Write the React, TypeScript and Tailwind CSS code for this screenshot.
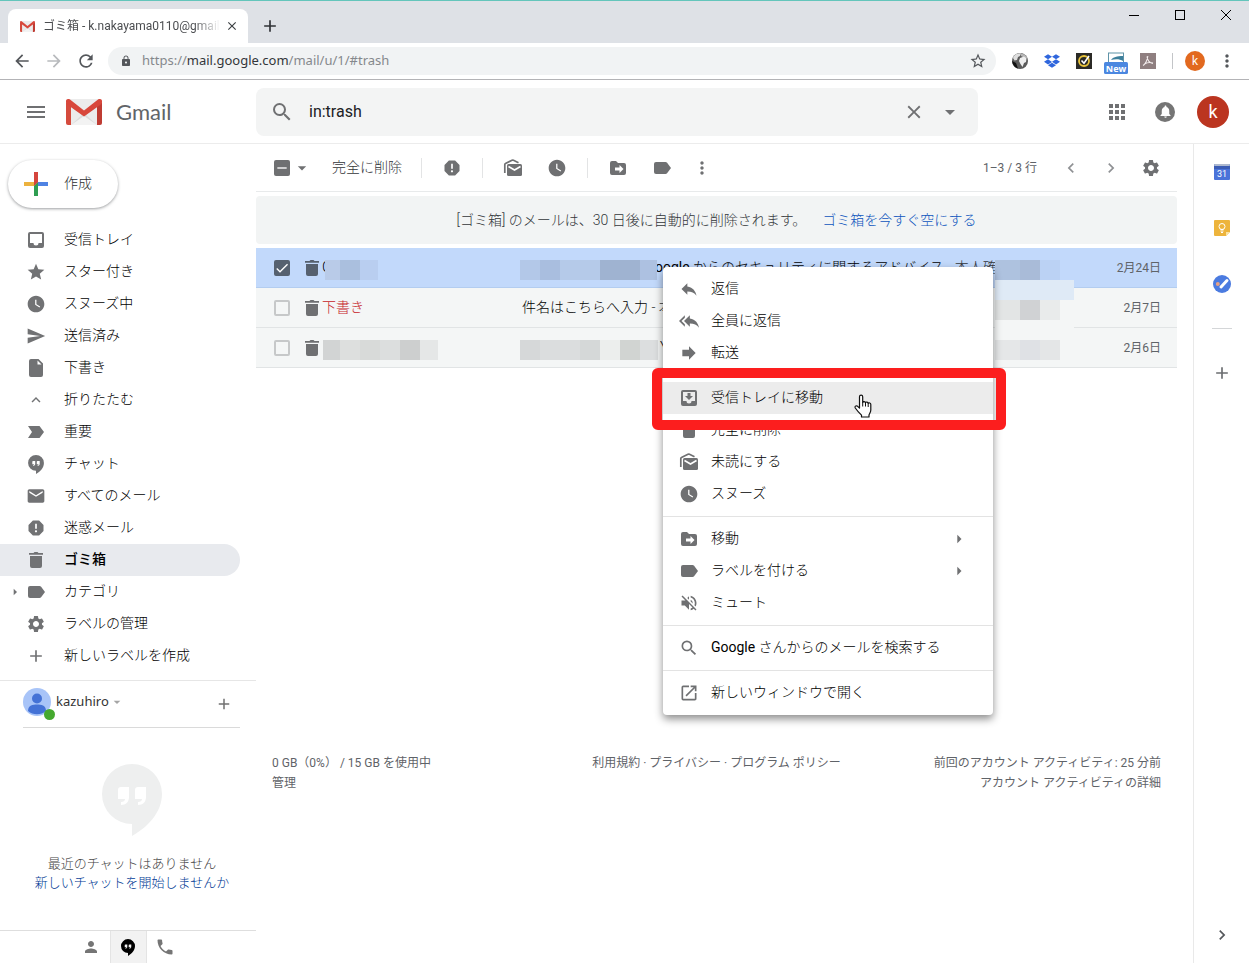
import type { ReactNode } from 'react'
import { FaDropbox } from 'react-icons/fa'
import {
  MdAdd,
  MdApps,
  MdArrowBack,
  MdArrowDropDown,
  MdArrowForward,
  MdArrowRight,
  MdCheck,
  MdChevronLeft,
  MdChevronRight,
  MdClose,
  MdEmail,
  MdExpandLess,
  MdForward,
  MdLock,
  MdMenu,
  MdMoreVert,
  MdNotifications,
  MdOpenInNew,
  MdPerson,
  MdPhone,
  MdRefresh,
  MdRemove,
  MdReply,
  MdReplyAll,
  MdReport,
  MdSearch,
  MdSend,
  MdSettings,
  MdStar,
  MdStarBorder,
  MdVolumeOff,
  MdWatchLater,
} from 'react-icons/md'

const GmailLogo = ({ className }: { className: string }) => (
  <svg viewBox="0 0 36 26" className={className} aria-hidden="true">
    <rect x="1" y="0" width="34" height="26" rx="2" fill="#ececec" />
    <path d="M5 26 18 14l13 12z" fill="#dcdcdc" />
    <path d="M5 26 18 17l13 9z" fill="#f3f3f3" />
    <path d="M5 6v20H2a2 2 0 0 1-2-2V3z" fill="#d54b3d" />
    <path d="M31 6v20h3a2 2 0 0 0 2-2V3z" fill="#bf3c33" />
    <path
      d="M0 3A2.500 2.500 0 0 1 4 .500L18 11.500 32 .500a2.500 2.500 0 0 1 4 2.500c0 1-.4 1.800-1.200 2.400L18 17.500 1.200 5.400A3 3 0 0 1 0 3z"
      fill="#d8473b"
    />
  </svg>
)

const HangoutsIcon = ({ className }: { className: string }) => (
  <svg viewBox="0 0 60 72" className={className} aria-hidden="true">
    <path
      fillRule="evenodd"
      fill="currentColor"
      d="M30 0a30 30 0 0 1 30 30c0 18-14 33-30 42V60a30 30 0 0 1 0-60zM19 23a3 3 0 0 0-3 3v9h7c0 2-1.500 3-4 3v3c5 0 8-3 8-8V23zM36 23a3 3 0 0 0-3 3v9h7c0 2-1.500 3-4 3v3c5 0 8-3 8-8V23z"
    />
  </svg>
)

// Solid 20px glyphs of the mail list
const Glyph = ({ d, className = '' }: { d: string; className?: string }) => (
  <svg
    viewBox="0 0 20 20"
    className={`size-5 ${className}`}
    fill="currentColor"
    fillRule="evenodd"
    aria-hidden="true"
  >
    <path d={d} />
  </svg>
)

const InboxIcon = () => (
  <Glyph d="M4 2h12a2 2 0 0 1 2 2v12a2 2 0 0 1-2 2H4a2 2 0 0 1-2-2V4a2 2 0 0 1 2-2zM4 4v9h3.500a2.500 2.500 0 0 0 5 0H16V4z" />
)

const MoveToInboxIcon = () => (
  <Glyph d="M4 2h12a2 2 0 0 1 2 2v12a2 2 0 0 1-2 2H4a2 2 0 0 1-2-2V4a2 2 0 0 1 2-2zM4 4v9h3.500a2.500 2.500 0 0 0 5 0H16V4zM8.500 5h3v3H14l-4 4-4-4h2.500z" />
)

const TrashIcon = ({ className }: { className?: string }) => (
  <Glyph
    className={className}
    d="M3 3h4.500l1-1h3l1 1H17v1.700H3zM4 6h12v10a2 2 0 0 1-2 2H6a2 2 0 0 1-2-2z"
  />
)

const LabelIcon = () => (
  <Glyph d="M4 4h9.500a2 2 0 0 1 1.600.8L19 10l-3.900 5.200a2 2 0 0 1-1.600.8H4a2 2 0 0 1-2-2V6a2 2 0 0 1 2-2z" />
)

const ImportantIcon = () => <Glyph d="M2 4h11.500L18 10l-4.500 6H2l4-6z" />

const FileIcon = () => (
  <Glyph d="M5 1h7.500L17 5.500V17a2 2 0 0 1-2 2H5a2 2 0 0 1-2-2V3a2 2 0 0 1 2-2zM11.500 2.500v4h4z" />
)

const FolderMoveIcon = () => (
  <Glyph d="M4 3h4l2 2h6a2 2 0 0 1 2 2v8a2 2 0 0 1-2 2H4a2 2 0 0 1-2-2V5a2 2 0 0 1 2-2zM11.500 7v2.500H7v3h4.500V15l4-4z" />
)

const UnreadIcon = ({ className }: { className?: string }) => (
  <svg viewBox="0 0 20 20" className={className} aria-hidden="true">
    <path
      d="M1.800 15V6.500a1 1 0 0 1 .6-.9L9 2.300a2 2 0 0 1 1.500 0L15.500 4.800"
      fill="none"
      stroke="currentColor"
      strokeWidth="1.700"
    />
    <rect x="4" y="6" width="15" height="12" rx="1.500" fill="currentColor" />
    <path
      d="M5.500 8.500l6 3.500 6-3.500"
      fill="none"
      stroke="#fff"
      strokeWidth="1.600"
    />
  </svg>
)

const PlusLogo = () => (
  <svg viewBox="0 0 24 24" className="size-6" aria-hidden="true">
    <path d="M10 0h4v10l-4 4z" fill="#d5453d" />
    <path d="M0 10h10l4 0-4 4H0z" fill="#ecb23e" />
    <path d="M14 10h10v4H10z" fill="#4f83e3" />
    <path d="M10 14l4-4v14h-4z" fill="#2f9e52" />
    <path d="M10 10h4l-4 4z" fill="#d5453d" />
  </svg>
)

const GlobeIcon = () => (
  <svg viewBox="0 0 16 16" className="size-4" aria-hidden="true">
    <circle cx="8" cy="8" r="8" fill="#5b5b5b" />
    <path d="M1 5C2 1.500 6 0 9 .400L8 3 6 4 5 7 2.500 7.500z" fill="#dedede" />
    <path d="M9 .400c3 .2 5.500 2 6.500 5l-3-.4L9 3z" fill="#b5b5b5" />
    <path d="M8 5l4-1.500 2.500 2L14 9l-2 1-1.500 4L8.500 11 7 8z" fill="#efefef" />
    <path d="M0 8l4 2 2 5.500C3 14.500 .5 12 0 8z" fill="#111" />
  </svg>
)

const NortonIcon = () => (
  <svg viewBox="0 0 16 16" className="size-4" aria-hidden="true">
    <rect width="16" height="16" fill="#2b2a26" />
    <circle cx="8" cy="8" r="5" fill="none" stroke="#e8c33a" strokeWidth="1.800" />
    <path d="M5.500 7.500l2.500 2.800L13 3" fill="none" stroke="#fff" strokeWidth="1.600" />
  </svg>
)

const NewsIcon = () => (
  <svg viewBox="0 0 24 22" className="h-[22px] w-6" aria-hidden="true">
    <rect x="4.500" y="1" width="15" height="12" fill="#fff" stroke="#5f93a8" />
    <path d="M7 8c2-3 6-4 12-4v5c-3-2-8-2-12-1z" fill="#3c7f9b" />
    <rect x="0" y="10" width="24" height="12" rx="1.500" fill="#4b87e0" />
    <text
      x="12"
      y="19.500"
      textAnchor="middle"
      fill="#fff"
      fontSize="9"
      fontWeight="bold"
      fontFamily="Open Sans, sans-serif"
    >
      New
    </text>
  </svg>
)

const AcrobatIcon = () => (
  <svg viewBox="0 0 16 16" className="size-4" aria-hidden="true">
    <rect width="16" height="16" fill="#8f7f80" />
    <path
      d="M3 12.500c2-1 4.500-5 4.800-9.500M7 3.500c.5 4 2.500 6.500 6 7M4.500 11c2.500-1.500 5.500-2 8.500-1"
      fill="none"
      stroke="#f4eeee"
      strokeWidth="1.100"
    />
  </svg>
)

const CalendarIcon = () => (
  <svg viewBox="0 0 16 16" className="size-4" aria-hidden="true">
    <rect width="16" height="16" rx="1" fill="#4a73d9" />
    <rect width="16" height="2" rx="1" fill="#aeb9cf" />
    <path d="M0 2h16v3H0z" fill="#3b5cb4" />
    <text
      x="8"
      y="13"
      textAnchor="middle"
      fill="#fff"
      fontSize="9"
      fontFamily="Roboto, sans-serif"
    >
      31
    </text>
  </svg>
)

const KeepIcon = () => (
  <svg viewBox="0 0 16 16" className="size-4" aria-hidden="true">
    <path d="M1 0h14a1 1 0 0 1 1 1v11l-4 4H1a1 1 0 0 1-1-1V1a1 1 0 0 1 1-1z" fill="#edb43c" />
    <path d="M12 16v-4h4z" fill="#fbe3a2" />
    <circle cx="8" cy="6.500" r="3" fill="none" stroke="#fff" />
    <path d="M6.500 9.500h3M6.500 11h3M7 12.500h2" stroke="#fff" />
  </svg>
)

const TasksIcon = () => (
  <svg viewBox="0 0 18 18" className="size-[18px]" aria-hidden="true">
    <circle cx="9" cy="9" r="9" fill="#4b7be0" />
    <circle cx="4.800" cy="9" r="2" fill="#e6a184" />
    <path d="M8 12l6-6.500" stroke="#fff" strokeWidth="3" strokeLinecap="round" />
  </svg>
)

const HandCursor = () => (
  <svg viewBox="0 0 18 24" className="h-6 w-[18px]" aria-hidden="true">
    <path
      d="M5.500 14V2.800a1.600 1.600 0 0 1 3.200 0V8.500c.3-1.300 2.600-1.200 2.800.300.500-1.200 2.500-1 2.700.600.700-.9 2.600-.5 2.600 1.200V16c0 2-1.300 3.500-1.800 5v2H7.500v-1.800C5.800 19.500 3 16.500 1.300 14c-.9-1.500.7-2.800 2-1.900z"
      fill="#fff"
      stroke="#111"
      strokeWidth="1.200"
      strokeLinejoin="round"
    />
    <path d="M8.700 8.500v4M11.500 9v3.500M14.200 9.500V13" stroke="#111" />
  </svg>
)

const NAV = [
  { label: '受信トレイ', icon: <InboxIcon /> },
  { label: 'スター付き', icon: <MdStar /> },
  { label: 'スヌーズ中', icon: <MdWatchLater /> },
  { label: '送信済み', icon: <MdSend /> },
  { label: '下書き', icon: <FileIcon /> },
  { label: '折りたたむ', icon: <MdExpandLess className="p-px" /> },
  { label: '重要', icon: <ImportantIcon /> },
  { label: 'チャット', icon: <HangoutsIcon className="h-[19px] w-4" /> },
  { label: 'すべてのメール', icon: <MdEmail /> },
  { label: '迷惑メール', icon: <MdReport /> },
  { label: 'ゴミ箱', icon: <TrashIcon />, selected: true },
  { label: 'カテゴリ', icon: <LabelIcon />, expandable: true },
  { label: 'ラベルの管理', icon: <MdSettings /> },
  { label: '新しいラベルを作成', icon: <MdAdd /> },
]

const MENU = [
  [
    { label: '返信', icon: <MdReply /> },
    { label: '全員に返信', icon: <MdReplyAll /> },
    { label: '転送', icon: <MdForward /> },
  ],
  [
    { label: '受信トレイに移動', icon: <MoveToInboxIcon />, active: true },
    { label: '完全に削除', icon: <TrashIcon /> },
    { label: '未読にする', icon: <UnreadIcon className="size-5" /> },
    { label: 'スヌーズ', icon: <MdWatchLater /> },
  ],
  [
    { label: '移動', icon: <FolderMoveIcon />, submenu: true },
    { label: 'ラベルを付ける', icon: <LabelIcon />, submenu: true },
    { label: 'ミュート', icon: <MdVolumeOff /> },
  ],
  [{ sender: 'Google', label: ' さんからのメールを検索する', icon: <MdSearch /> }],
  [{ label: '新しいウィンドウで開く', icon: <MdOpenInNew /> }],
]

const IconButton = ({
  label,
  className = '',
  children,
}: {
  label: string
  className?: string
  children: ReactNode
}) => (
  <button
    type="button"
    aria-label={label}
    className={`flex shrink-0 items-center justify-center ${className}`}
  >
    {children}
  </button>
)

const BrowserChrome = () => (
  <header className="font-['Noto_Sans','Noto_Sans_CJK_JP',sans-serif]">
    <div className="flex h-[43px] border-t border-[#63c5bb] bg-[#dee1e6] pl-2">
      <div className="mt-2 flex w-60 items-center rounded-t-lg bg-white pr-2 pl-3">
        <GmailLogo className="h-[11px] w-[15px] shrink-0" />
        <span className="ml-2 min-w-0 flex-1 overflow-hidden mask-r-from-85% font-['Roboto','Noto_Sans_CJK_JP',sans-serif] text-[12px] whitespace-nowrap text-[#4b4d50]">
          ゴミ箱 - k.nakayama0110@gmail.c
        </span>
        <IconButton label="タブを閉じる" className="ml-1 size-4 text-[14px] text-[#3c4043]">
          <MdClose />
        </IconButton>
      </div>
      <IconButton label="新しいタブ" className="mt-2 ml-3 w-5 text-[20px] text-[#2f3236]">
        <MdAdd />
      </IconButton>
      <div className="ml-auto flex h-7 text-black">
        <IconButton label="最小化" className="w-[46px]">
          <svg viewBox="0 0 10 10" className="size-[10px]" stroke="currentColor">
            <path d="M0 5.500h10" />
          </svg>
        </IconButton>
        <IconButton label="最大化" className="w-[46px]">
          <svg viewBox="0 0 10 10" className="size-[10px]" fill="none" stroke="currentColor">
            <rect x=".5" y=".5" width="9" height="9" />
          </svg>
        </IconButton>
        <IconButton label="閉じる" className="w-[46px]">
          <svg viewBox="0 0 10 10" className="size-[10px]" stroke="currentColor">
            <path d="M0 0l10 10M10 0L0 10" />
          </svg>
        </IconButton>
      </div>
    </div>

    <div className="flex h-[37px] items-center border-b border-[#b3b3b6] bg-white pr-3 pl-3 text-[#54575b]">
      <IconButton label="戻る" className="size-5 text-[20px]">
        <MdArrowBack />
      </IconButton>
      <IconButton label="進む" className="ml-3 size-5 text-[20px] text-[#b8babd]">
        <MdArrowForward />
      </IconButton>
      <IconButton label="再読み込み" className="ml-3 size-5 text-[20px]">
        <MdRefresh />
      </IconButton>
      <div className="ml-3 flex h-7 flex-1 items-center rounded-full bg-[#f1f3f4] pr-2 pl-3">
        <MdLock className="size-3" />
        <div
          role="textbox"
          aria-label="アドレス"
          contentEditable
          suppressContentEditableWarning
          className="ml-[10px] flex-1 text-[13px] text-[#85888c]"
        >
          https://<span className="text-[#33363a]">mail.google.com</span>/mail/u/1/#trash
        </div>
        <IconButton label="ブックマーク" className="size-5 text-[18px]">
          <MdStarBorder />
        </IconButton>
      </div>
      <div className="ml-4 flex items-center gap-4">
        <GlobeIcon />
        <FaDropbox className="size-4 text-[#2f66dd]" />
        <NortonIcon />
        <div className="-mx-1 pt-1">
          <NewsIcon />
        </div>
        <AcrobatIcon />
      </div>
      <span className="ml-4 h-4 w-px bg-[#c3c5c8]" />
      <IconButton
        label="プロフィール"
        className="ml-3 size-5 rounded-full bg-[#e2691f] text-[12px] text-white"
      >
        k
      </IconButton>
      <IconButton label="メニュー" className="ml-3 size-5 text-[20px]">
        <MdMoreVert />
      </IconButton>
    </div>
  </header>
)

const AppHeader = () => (
  <div className="flex h-16 items-center border-b border-[#ececec] pr-5 pl-6 text-[#6f7072]">
    <div className="flex w-[232px] shrink-0 items-center">
      <IconButton label="メインメニュー" className="size-6 text-[24px]">
        <MdMenu />
      </IconButton>
      <a href="#inbox" className="ml-[18px] flex items-center gap-[14px]">
        <GmailLogo className="h-[26px] w-9" />
        <span className="font-['Lato',sans-serif] text-[22px] text-[#616468]">Gmail</span>
      </a>
    </div>
    <div className="flex h-12 max-w-[722px] flex-1 items-center rounded-lg bg-[#f3f4f4] pr-4 pl-[14px]">
      <MdSearch className="size-6" />
      <input
        type="text"
        aria-label="メールを検索"
        defaultValue="in:trash"
        className="ml-[15px] min-w-0 flex-1 bg-transparent text-[16px] text-[#202124] outline-none"
      />
      <IconButton label="検索をクリア" className="size-6 text-[22px]">
        <MdClose />
      </IconButton>
      <IconButton label="検索オプション" className="ml-3 size-6 text-[24px]">
        <MdArrowDropDown />
      </IconButton>
    </div>
    <div className="ml-auto flex items-center gap-[22px]">
      <IconButton label="Google アプリ" className="mr-1 size-6 text-[24px]">
        <MdApps />
      </IconButton>
      <IconButton
        label="通知"
        className="size-5 rounded-full bg-[#757575] text-[15px] text-white"
      >
        <MdNotifications />
      </IconButton>
      <IconButton
        label="アカウント"
        className="size-8 rounded-full bg-[#bb3520] text-[18px] text-white"
      >
        k
      </IconButton>
    </div>
  </div>
)

const Sidebar = () => (
  <aside className="flex w-64 shrink-0 flex-col pt-4">
    <button
      type="button"
      className="ml-2 flex h-12 w-[110px] items-center gap-4 rounded-full bg-white pl-4 text-[14px] font-light text-[#2c2e31] shadow-[0_1px_3px_rgba(60,64,67,0.5)]"
    >
      <PlusLogo />
      <span className="pb-0.5">作成</span>
    </button>

    <nav className="mt-4">
      {NAV.map((item) => (
        <a
          key={item.label}
          href="#label"
          className={`mr-4 flex h-8 items-center rounded-r-full text-[14px] text-black ${
            item.selected ? 'bg-[#e8eaee] font-medium' : 'font-light'
          }`}
        >
          <span className="flex w-[26px] justify-center pl-1 text-[16px] text-[#717274]">
            {item.expandable && <MdArrowRight />}
          </span>
          <span className="flex size-5 items-center justify-center text-[20px] text-[#717274]">
            {item.icon}
          </span>
          <span className="ml-[18px] pb-0.5">{item.label}</span>
        </a>
      ))}
    </nav>

    <section className="mt-2 border-t border-[#e6e6e6]">
      <div className="mr-4 ml-[23px] flex h-[47px] items-center border-b border-[#dadada]">
        <div className="flex items-center pb-1">
          <span className="relative size-7">
            <svg viewBox="0 0 28 28" className="size-7" aria-hidden="true">
              <circle cx="14" cy="14" r="14" fill="#a8c4f8" />
              <circle cx="14" cy="10.500" r="5" fill="#4472d6" />
              <path d="M5 23c0-6 5-6.500 9-6.500s9 .5 9 6.500a14 14 0 0 1-18 0z" fill="#4472d6" />
            </svg>
            <span className="absolute -right-1 -bottom-1 size-[11px] rounded-full bg-[#45a92f]" />
          </span>
          <button
            type="button"
            className="ml-[5px] flex items-center font-['Noto_Sans',sans-serif] text-[13px] text-[#333]"
          >
            kazuhiro
            <MdArrowDropDown className="size-4 text-[#a5a5a5]" />
          </button>
        </div>
        <IconButton label="新しい会話" className="ml-auto size-8 text-[18px] text-[#717171]">
          <MdAdd />
        </IconButton>
      </div>
      <div className="flex flex-col items-center pt-9 pl-2 text-[13px] leading-[19px] font-light text-[#444]">
        <HangoutsIcon className="mb-[18px] h-[72px] w-[60px] text-[#eeefef]" />
        <p>最近のチャットはありません</p>
        <a href="#chat" className="text-[#003a94]">
          新しいチャットを開始しませんか
        </a>
      </div>
    </section>

    <div className="mt-auto flex h-[33px] justify-center border-t border-[#dedede] text-[#757575]">
      <IconButton label="連絡先" className="w-[37px] text-[18px]">
        <MdPerson />
      </IconButton>
      <IconButton label="ハングアウト" className="w-[37px] border-x border-[#e4e4e4] bg-[#f2f2f2] text-black">
        <HangoutsIcon className="h-[17px] w-[14px]" />
      </IconButton>
      <IconButton label="電話" className="w-[37px] text-[20px]">
        <MdPhone />
      </IconButton>
    </div>
  </aside>
)

const Divider = () => <span className="h-5 w-px bg-[#e3e4e5]" />

const Toolbar = () => (
  <div className="flex h-12 items-center border-b border-[#e8eaeb] pr-4 pl-[17px] text-[20px] text-[#6f7072]">
    <label className="grid size-[18px] place-items-center">
      <input
        type="checkbox"
        aria-label="選択"
        className="col-start-1 row-start-1 size-4 appearance-none rounded-xs bg-[#6f7072]"
      />
      <MdRemove className="pointer-events-none col-start-1 row-start-1 size-4 text-white" />
    </label>
    <IconButton label="選択メニュー" className="ml-px w-5">
      <MdArrowDropDown />
    </IconButton>
    <button type="button" className="ml-5 text-[14px] font-light text-[#33363a]">
      完全に削除
    </button>
    <div className="ml-[19px] flex items-center gap-5">
      <Divider />
      <IconButton label="迷惑メールではない">
        <MdReport />
      </IconButton>
      <Divider />
      <div className="flex gap-6">
        <IconButton label="未読にする">
          <UnreadIcon className="size-5" />
        </IconButton>
        <IconButton label="スヌーズ">
          <MdWatchLater />
        </IconButton>
      </div>
      <Divider />
      <div className="flex gap-6">
        <IconButton label="移動">
          <FolderMoveIcon />
        </IconButton>
        <IconButton label="ラベル">
          <LabelIcon />
        </IconButton>
      </div>
      <IconButton label="その他">
        <MdMoreVert />
      </IconButton>
    </div>
    <span className="ml-auto text-[12px] text-[#5f6368]">1–3 / 3 行</span>
    <IconButton label="前へ" className="ml-6 text-[#8f9194]">
      <MdChevronLeft />
    </IconButton>
    <IconButton label="次へ" className="ml-5 text-[#8f9194]">
      <MdChevronRight />
    </IconButton>
    <IconButton label="設定" className="ml-5">
      <MdSettings />
    </IconButton>
  </div>
)

const MailRow = ({
  name,
  date,
  checked,
  sender,
  children,
}: {
  name: string
  date: string
  checked?: boolean
  sender?: ReactNode
  children?: ReactNode
}) => (
  <tr
    className={`h-10 ${
      checked
        ? 'bg-[#c2d9fb] shadow-[inset_0_-1px_0_#b3cdf0]'
        : 'bg-[#f4f6f6] shadow-[inset_0_-1px_0_#e1e4e5]'
    }`}
  >
    <td className="pl-[17px]">
      <label className="grid size-[18px] place-items-center">
        <input
          type="checkbox"
          aria-label={name}
          defaultChecked={checked}
          className="col-start-1 row-start-1 size-4 appearance-none rounded-xs border-2 border-[#c6c8c9] checked:border-[#56616f] checked:bg-[#56616f]"
        />
        {checked && (
          <MdCheck className="pointer-events-none col-start-1 row-start-1 size-4 text-white" />
        )}
      </label>
    </td>
    <td>
      <TrashIcon className={checked ? 'text-[#56616f]' : 'text-[#6f7072]'} />
    </td>
    <td className="pb-0.5 font-light whitespace-nowrap">{sender}</td>
    <td className="overflow-hidden pb-0.5 font-light whitespace-nowrap">{children}</td>
    <td className="pr-4 text-right text-[12px] text-[#5f6368]">{date}</td>
  </tr>
)

// Pixelated patches that hide private parts of the rows
const Mosaic = ({ className, cells }: { className: string; cells: string[] }) => (
  <div className={`absolute flex h-5 ${className}`}>
    {cells.map((cell, i) => (
      <span key={i} className={`h-full ${cell}`} />
    ))}
  </div>
)

const MailList = () => (
  <div className="relative mt-1">
    <table className="w-full table-fixed border-collapse text-[14px] text-black">
      <colgroup>
        <col className="w-[46px]" />
        <col className="w-5" />
        <col className="w-[200px]" />
        <col />
        <col className="w-20" />
      </colgroup>
      <tbody>
        <MailRow name="Google" date="2月24日" checked sender="G">
          <span className="pl-[133px]">
            <span className="font-normal">oogle</span> からのセキュリティに関するアドバイス
          </span>
          <span className="text-[#33363a]"> - 本人確認</span>
        </MailRow>
        <MailRow
          name="下書き"
          date="2月7日"
          sender={<span className="text-[#c5221f]">下書き</span>}
        >
          件名はこちらへ入力 <span className="text-[#33363a]">- 本</span>
        </MailRow>
        <MailRow name="受信メール" date="2月6日">
          <span className="pl-[138px]">Y</span>
        </MailRow>
      </tbody>
    </table>
    <Mosaic
      className="top-3 left-[69px]"
      cells={['w-[15px] bg-[#b9cbe8]', 'w-5 bg-[#aabfde]', 'w-[18px] bg-[#b9cef0]']}
    />
    <Mosaic
      className="top-3 left-[264px]"
      cells={[
        'w-5 bg-[#b3c8e8]',
        'w-5 bg-[#a9bedf]',
        'w-10 bg-[#b5cae9]',
        'w-10 bg-[#9fb3d1]',
        'w-[17px] bg-[#adc1e1]',
      ]}
    />
    <Mosaic
      className="top-[92px] left-[67px]"
      cells={[
        'w-[17px] bg-[#d2d4d4]',
        'w-5 bg-[#dddfde]',
        'w-5 bg-[#d8dad9]',
        'w-5 bg-[#dcdede]',
        'w-5 bg-[#cdcfcf]',
        'w-[18px] bg-[#e5e7e7]',
      ]}
    />
    <Mosaic
      className="top-[92px] left-[264px]"
      cells={[
        'w-5 bg-[#d6d8d9]',
        'w-10 bg-[#dbddde]',
        'w-5 bg-[#d5d8d8]',
        'w-5 bg-[#eceeed]',
        'w-5 bg-[#d1d4d2]',
        'w-[18px] bg-[#dcdedf]',
      ]}
    />
    <Mosaic
      className="top-3 left-[739px]"
      cells={['w-[25px] bg-[#aec2df]', 'w-5 bg-[#a9bbd8]', 'w-5 bg-[#bbd2f4]']}
    />
    <Mosaic className="top-8 left-[739px]" cells={['w-[79px] bg-[#dfeaf6]']} />
    <Mosaic
      className="top-[52px] left-[739px]"
      cells={['w-[25px] bg-[#e3e5e5]', 'w-5 bg-[#d0d2d4]', 'w-5 bg-[#e9ebeb]']}
    />
    <Mosaic className="top-[72px] left-[739px]" cells={['w-[79px] bg-[#f4f6f6]']} />
    <Mosaic
      className="top-[92px] left-[739px]"
      cells={['w-[25px] bg-[#e5e7e8]', 'w-5 bg-[#dfe1e5]', 'w-5 bg-[#e4e6e7]']}
    />
  </div>
)

const ContextMenu = () => (
  <div className="absolute top-[123px] left-[407px] w-[330px] rounded bg-white shadow-[0_4px_8px_rgba(0,0,0,0.45)]">
    {MENU.map((group, i) => (
      <div key={i} role="group" className={`py-1.5 ${i > 0 ? 'border-t border-[#e3e3e3]' : ''}`}>
        {group.map((item) => (
          <button
            key={item.label}
            type="button"
            className={`flex h-8 w-full items-center pr-6 pl-4 text-[14px] font-light text-black ${
              'active' in item ? 'bg-[#ececec]' : ''
            }`}
          >
            <span className="text-[20px] text-[#6f7072]">{item.icon}</span>
            <span className="ml-3 pb-0.5">
              {'sender' in item && <span className="font-normal">{item.sender}</span>}
              {item.label}
            </span>
            {'submenu' in item && <MdArrowRight className="ml-auto size-5 text-[#6f7072]" />}
          </button>
        ))}
      </div>
    ))}
    <div className="absolute top-[101px] -left-[11px] h-[62px] w-[354px] rounded-md border-[10px] border-[#fc1e1e]" />
    <div className="absolute top-[127px] left-[191px]">
      <HandCursor />
    </div>
  </div>
)

const SidePanel = () => (
  <aside className="flex w-14 shrink-0 flex-col items-center border-l border-[#e9e9e9] pt-3">
    <IconButton label="カレンダー" className="size-8">
      <CalendarIcon />
    </IconButton>
    <IconButton label="Keep" className="mt-6 size-8">
      <KeepIcon />
    </IconButton>
    <IconButton label="ToDo リスト" className="mt-6 size-8">
      <TasksIcon />
    </IconButton>
    <span className="mt-7 h-px w-5 bg-[#d4d6d8]" />
    <IconButton label="アドオンを取得" className="mt-7 size-8 text-[20px] text-[#6b6d70]">
      <MdAdd />
    </IconButton>
    <IconButton label="サイドパネルを非表示" className="mt-auto mb-3 size-8 text-[20px] text-[#55585c]">
      <MdChevronRight />
    </IconButton>
  </aside>
)

export default function App() {
  return (
    <div className="flex min-h-screen flex-col bg-white font-['Roboto','Noto_Sans_CJK_JP',sans-serif]">
      <BrowserChrome />
      <AppHeader />
      <div className="flex flex-1">
        <Sidebar />
        <main className="relative min-w-0 flex-1 pr-4">
          <Toolbar />
          <div className="mt-1 flex h-12 items-center justify-center gap-4 rounded bg-[#f2f4f4] text-[14px] font-light text-[#33363a]">
            <span>[ゴミ箱] のメールは、30 日後に自動的に削除されます。</span>
            <a href="#empty" className="text-[#0d55bd]">
              ゴミ箱を今すぐ空にする
            </a>
          </div>
          <MailList />
          <footer className="mt-[385px] grid grid-cols-3 px-4 text-[12px] leading-5 text-[#5f6368]">
            <div>
              0 GB（0%） / 15 GB を使用中
              <br />
              <a href="#storage">管理</a>
            </div>
            <div className="text-center whitespace-nowrap">
              <a href="#terms">利用規約</a> · <a href="#privacy">プライバシー</a> ·{' '}
              <a href="#policy">プログラム ポリシー</a>
            </div>
            <div className="text-right">
              前回のアカウント アクティビティ: 25 分前
              <br />
              <a href="#activity">アカウント アクティビティの詳細</a>
            </div>
          </footer>
          <ContextMenu />
        </main>
        <SidePanel />
      </div>
    </div>
  )
}
